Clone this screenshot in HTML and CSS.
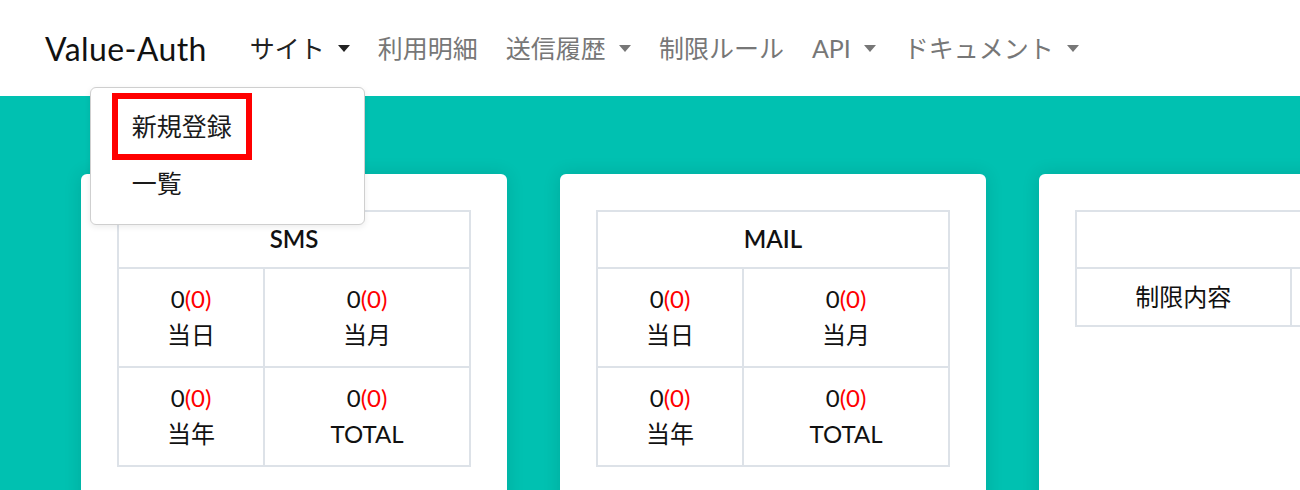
FILE: index.html
```html
<!DOCTYPE html>
<html lang="ja">
<head>
    <meta charset="UTF-8">
    <meta name="viewport" content="width=device-width, initial-scale=1.0">
    <title>Value-Auth</title>
    <link rel="stylesheet" href="styles.css">
</head>
<body>
    <header class="navbar">
        <a class="brand" href="#">Value-Auth</a>
        <nav class="nav">
            <div class="nav-item dropdown">
                <a class="nav-link active" href="#">サイト<span class="caret"></span></a>
                <div class="dropdown-menu">
                    <a class="dropdown-item first" href="#"><span class="mark">新規登録</span></a>
                    <a class="dropdown-item" href="#">一覧</a>
                </div>
            </div>
            <div class="nav-item"><a class="nav-link" href="#">利用明細</a></div>
            <div class="nav-item"><a class="nav-link" href="#">送信履歴<span class="caret"></span></a></div>
            <div class="nav-item"><a class="nav-link" href="#">制限ルール</a></div>
            <div class="nav-item"><a class="nav-link" href="#">API<span class="caret"></span></a></div>
            <div class="nav-item"><a class="nav-link" href="#">ドキュメント<span class="caret"></span></a></div>
        </nav>
    </header>

    <main class="content">
        <div class="card">
            <table class="stats">
                <tr><th colspan="2">SMS</th></tr>
                <tr>
                    <td class="col-a">0<span class="err">(0)</span><br>当日</td>
                    <td>0<span class="err">(0)</span><br>当月</td>
                </tr>
                <tr>
                    <td class="col-a">0<span class="err">(0)</span><br>当年</td>
                    <td>0<span class="err">(0)</span><br>TOTAL</td>
                </tr>
            </table>
        </div>
        <div class="card">
            <table class="stats">
                <tr><th colspan="2">MAIL</th></tr>
                <tr>
                    <td class="col-a">0<span class="err">(0)</span><br>当日</td>
                    <td>0<span class="err">(0)</span><br>当月</td>
                </tr>
                <tr>
                    <td class="col-a">0<span class="err">(0)</span><br>当年</td>
                    <td>0<span class="err">(0)</span><br>TOTAL</td>
                </tr>
            </table>
        </div>
        <div class="card">
            <table class="stats rules">
                <tr><th colspan="2">&nbsp;</th></tr>
                <tr>
                    <td class="col-rule">制限内容</td>
                    <td>&nbsp;</td>
                </tr>
            </table>
        </div>
    </main>
</body>
</html>
```

FILE: styles.css
```css
html {
    overflow: hidden;
}
body {
    margin: 0;
    font-family: 'Lato', 'Noto Sans CJK JP', sans-serif;
    color: #000;
    background-color: #00c1b1;
    min-height: 100vh;
}
a {
    text-decoration: none;
    color: inherit;
}

/* top bar */
.navbar {
    display: flex;
    align-items: center;
    height: 96px;
    padding-left: 45px;
    background: #fff;
    position: relative;
    z-index: 2;
}
.brand {
    font-size: 32px;
    letter-spacing: 0.4px;
    color: #111;
    margin-right: 29px;
}
.nav {
    display: flex;
    align-items: center;
}
.nav-item {
    position: relative;
}
.nav-link {
    display: flex;
    align-items: center;
    padding: 0 14px;
    font-size: 25px;
    color: #777;
    line-height: 36px;
}
.nav-link.active {
    color: #222;
}
.caret {
    display: inline-block;
    margin-left: 13px;
    border-top: 7px solid currentColor;
    border-left: 6px solid transparent;
    border-right: 6px solid transparent;
}

/* dropdown */
.dropdown-menu {
    position: absolute;
    top: 57px;
    left: -146px;
    width: 273px;
    padding: 5px 0 18px;
    background: #fff;
    border: 1px solid #cfcfcf;
    border-radius: 6px;
    box-shadow: 0 2px 6px rgba(0, 0, 0, 0.08);
}
.dropdown-item {
    display: block;
    font-size: 25px;
    color: #1a1a1a;
    line-height: 46px;
    padding-left: 41px;
}
.dropdown-item.first {
    padding-left: 21px;
    line-height: 55px;
}
.mark {
    display: inline-block;
    border: 6px solid #ff0000;
    padding: 0 14px;
}

/* cards */
.content {
    display: flex;
    gap: 53px;
    padding: 78px 0 0 81px;
}
.card {
    flex: 0 0 auto;
    width: 354px;
    padding: 36px;
    height: 400px;
    background: #fff;
    border-radius: 6px;
    box-shadow: 0 0 18px rgba(0, 0, 0, 0.12);
}
.stats {
    width: 100%;
    border-collapse: collapse;
    text-align: center;
    font-size: 24px;
}
.stats th,
.stats td {
    border: 2px solid #dde2e8;
    line-height: 36.5px;
}
.stats th {
    font-weight: 600;
    padding: 9px 0;
    color: #111;
}
.stats td {
    padding: 12px 0;
    color: #111;
}
.stats .col-a {
    width: 41.5%;
}
.rules td {
    padding: 10px 0;
}
.rules .col-rule {
    width: 61%;
}
.err {
    color: #ff0000;
}
```
